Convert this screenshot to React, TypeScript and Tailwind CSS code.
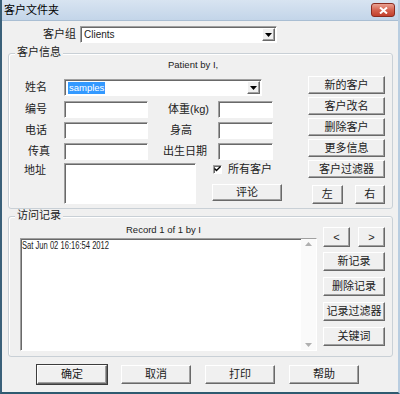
import React from "react";

const font = "font-['Liberation_Sans','Noto_Sans_CJK_SC',sans-serif]";
const raised =
  "flex items-center justify-center bg-[#f0f0f0] border border-t-white border-l-white border-b-[#696969] border-r-[#696969] shadow-[inset_-1px_-1px_0_#a0a0a0] text-[11px] leading-none text-[#222]";
const sunken =
  "bg-white border border-t-[#a0a0a0] border-l-[#a0a0a0] border-b-white border-r-white shadow-[inset_1px_1px_0_#696969]";

function Btn({ className, children }: { className: string; children: React.ReactNode }) {
  return <button className={`${raised} ${className}`}>{children}</button>;
}

function Combo({ className, children }: { className: string; children?: React.ReactNode }) {
  return (
    <div className={`${sunken} flex items-center pl-[2px] pr-[1px] ${className}`}>
      <div className="flex-1 flex items-center">{children}</div>
      <span className={`${raised} w-[13px] h-[13px]`}>
        <svg width="7" height="4" viewBox="0 0 7 4">
          <path d="M0 0h7L3.5 4z" fill="#000" />
        </svg>
      </span>
    </div>
  );
}

function Field({ className }: { className: string }) {
  return <div className={`${sunken} h-[17px] ${className}`} />;
}

export default function App() {
  return (
    <div
      className={`w-[400px] h-[394px] flex flex-col overflow-hidden bg-[#f0f0f0] border-l-2 border-r-2 border-b-2 border-l-[#3a6079] border-r-[#b9cde0] border-b-[#2e5a70] ${font} text-[#222]`}
    >
      {/* title bar */}
      <div className="h-[21px] shrink-0 flex items-center justify-between bg-linear-to-b from-[#d8e4f1] to-[#c3d5e9] border-b border-[#a9bed3]">
        <span className="pl-[2px] text-[11px] leading-none text-black">客户文件夹</span>
        <span className="mr-[3px] w-[24px] h-[14px] rounded-[3px] border border-[#8a2b1f] bg-linear-to-b from-[#e9a192] via-[#d5624f] to-[#c23f2c] flex items-center justify-center">
          <svg width="9" height="7" viewBox="0 0 9 7">
            <path d="M1 0.5l7 6M8 0.5l-7 6" stroke="#fff" strokeWidth="2" />
          </svg>
        </span>
      </div>

      {/* client group */}
      <div className="mt-[5px] h-[17px] flex items-center">
        <span className="ml-[40px] w-[34px] text-right text-[11px] leading-none">客户组</span>
        <Combo className="ml-[4px] w-[197px] h-[17px]">
          <span className="pl-[1px] text-[10px] leading-none">Clients</span>
        </Combo>
      </div>

      {/* 客户信息 */}
      <div className="mt-[10px] ml-[6px] w-[385px] border border-[#c9d0d6] rounded-[3px] shadow-[inset_1px_1px_0_#fff] pb-[4px]">
        <span className="block w-fit -mt-[8px] ml-[6px] px-[2px] h-[13px] leading-[13px] bg-[#f0f0f0] text-[11px]">
          客户信息
        </span>
        <div className="h-[11px] ml-[159px] text-[9.5px] leading-[11px]">Patient by I,</div>
        <div className="mt-[6px] flex">
          <div className="w-[299px] flex flex-col text-[11px] leading-none">
            <div className="mt-[3px] h-[17px] flex items-center">
              <span className="w-[55px] pl-[16px]">姓名</span>
              <Combo className="w-[198px] h-[17px]">
                <span className="ml-[1px] px-[1px] bg-[#3399ff] text-white text-[9.5px] leading-[12px]">samples</span>
              </Combo>
            </div>
            <div className="mt-[5px] h-[17px] flex items-center">
              <span className="w-[55px] pl-[16px]">编号</span>
              <Field className="w-[84px]" />
              <span className="w-[70px] pl-[20px] whitespace-nowrap">体重(kg)</span>
              <Field className="w-[55px]" />
            </div>
            <div className="mt-[4px] h-[17px] flex items-center">
              <span className="w-[55px] pl-[16px]">电话</span>
              <Field className="w-[84px]" />
              <span className="w-[70px] pl-[22px]">身高</span>
              <Field className="w-[55px]" />
            </div>
            <div className="mt-[4px] h-[17px] flex items-center">
              <span className="w-[55px] pl-[19px]">传真</span>
              <Field className="w-[84px]" />
              <span className="w-[70px] pl-[15px]">出生日期</span>
              <Field className="w-[55px]" />
            </div>
            <div className="mt-[3px] flex">
              <span className="w-[55px] pl-[15px] pt-[2px]">地址</span>
              <div className={`${sunken} w-[132px] h-[41px]`} />
              <div className="ml-[16px] flex flex-col">
                <div className="mt-[1px] h-[10px] flex items-center">
                  <span className={`${sunken} ml-[1px] w-[9px] h-[9px] flex items-center justify-center`}>
                    <svg width="7" height="6" viewBox="0 0 7 6">
                      <path d="M0.5 2.5l2 2 4-4" stroke="#000" strokeWidth="1.4" fill="none" />
                    </svg>
                  </span>
                  <span className="ml-[6px]">所有客户</span>
                </div>
                <Btn className="mt-[10px] w-[70px] h-[17px]">评论</Btn>
              </div>
            </div>
          </div>
          <div className="w-[77px] flex flex-col gap-[3px]">
            <Btn className="w-full h-[18px]">新的客户</Btn>
            <Btn className="w-full h-[18px]">客户改名</Btn>
            <Btn className="w-full h-[18px]">删除客户</Btn>
            <Btn className="w-full h-[18px]">更多信息</Btn>
            <Btn className="w-full h-[18px]">客户过滤器</Btn>
            <div className="mt-[4px] h-[19px] flex">
              <Btn className="ml-[4px] w-[31px] h-[19px]">左</Btn>
              <Btn className="ml-[12px] w-[31px] h-[19px]">右</Btn>
            </div>
          </div>
        </div>
      </div>

      {/* 访问记录 */}
      <div className="mt-[7px] ml-[6px] w-[385px] border border-[#c9d0d6] rounded-[3px] shadow-[inset_1px_1px_0_#fff] pb-[5px]">
        <span className="block w-fit -mt-[8px] ml-[6px] px-[2px] h-[13px] leading-[13px] bg-[#f0f0f0] text-[11px]">
          访问记录
        </span>
        <div className="flex">
          <div className="w-[308px] flex flex-col">
            <div className="mt-[2px] h-[11px] ml-[117px] text-[9.5px] leading-[11px] whitespace-nowrap">
              Record 1 of 1 by I
            </div>
            <div className={`${sunken} mt-[3px] ml-[11px] w-[297px] h-[113px] flex`}>
              <div className="flex-1 pl-[1px] pt-[1px]">
                <div className="origin-left scale-x-[0.76] text-[10px] leading-[12px] whitespace-nowrap">
                  Sat Jun 02 16:16:54 2012
                </div>
              </div>
              <div className="w-[15px] flex flex-col items-center justify-between py-[3px] bg-[#fafafa]">
                <svg width="7" height="4" viewBox="0 0 7 4">
                  <path d="M0 4h7L3.5 0z" fill="#b0b0b0" />
                </svg>
                <svg width="7" height="4" viewBox="0 0 7 4">
                  <path d="M0 0h7L3.5 4z" fill="#b0b0b0" />
                </svg>
              </div>
            </div>
          </div>
          <div className="ml-[6px] w-[62px] flex flex-col">
            <div className="mt-[5px] h-[20px] flex">
              <Btn className="w-[27px] h-[20px] text-[9px]">&lt;</Btn>
              <Btn className="ml-[8px] w-[27px] h-[20px] text-[9px]">&gt;</Btn>
            </div>
            <div className="mt-[5px] flex flex-col gap-[6px]">
              <Btn className="w-[62px] h-[19px]">新记录</Btn>
              <Btn className="w-[62px] h-[19px]">删除记录</Btn>
              <Btn className="w-[62px] h-[19px]">记录过滤器</Btn>
              <Btn className="w-[62px] h-[19px]">关键词</Btn>
            </div>
          </div>
        </div>
      </div>

      {/* dialog buttons */}
      <div className="mt-[8px] ml-[35px] flex gap-[14px]">
        <Btn className="w-[70px] h-[19px] outline-1 outline-[#3c3c3c]">确定</Btn>
        <Btn className="w-[70px] h-[19px]">取消</Btn>
        <Btn className="w-[70px] h-[19px]">打印</Btn>
        <Btn className="w-[70px] h-[19px]">帮助</Btn>
      </div>
    </div>
  );
}
